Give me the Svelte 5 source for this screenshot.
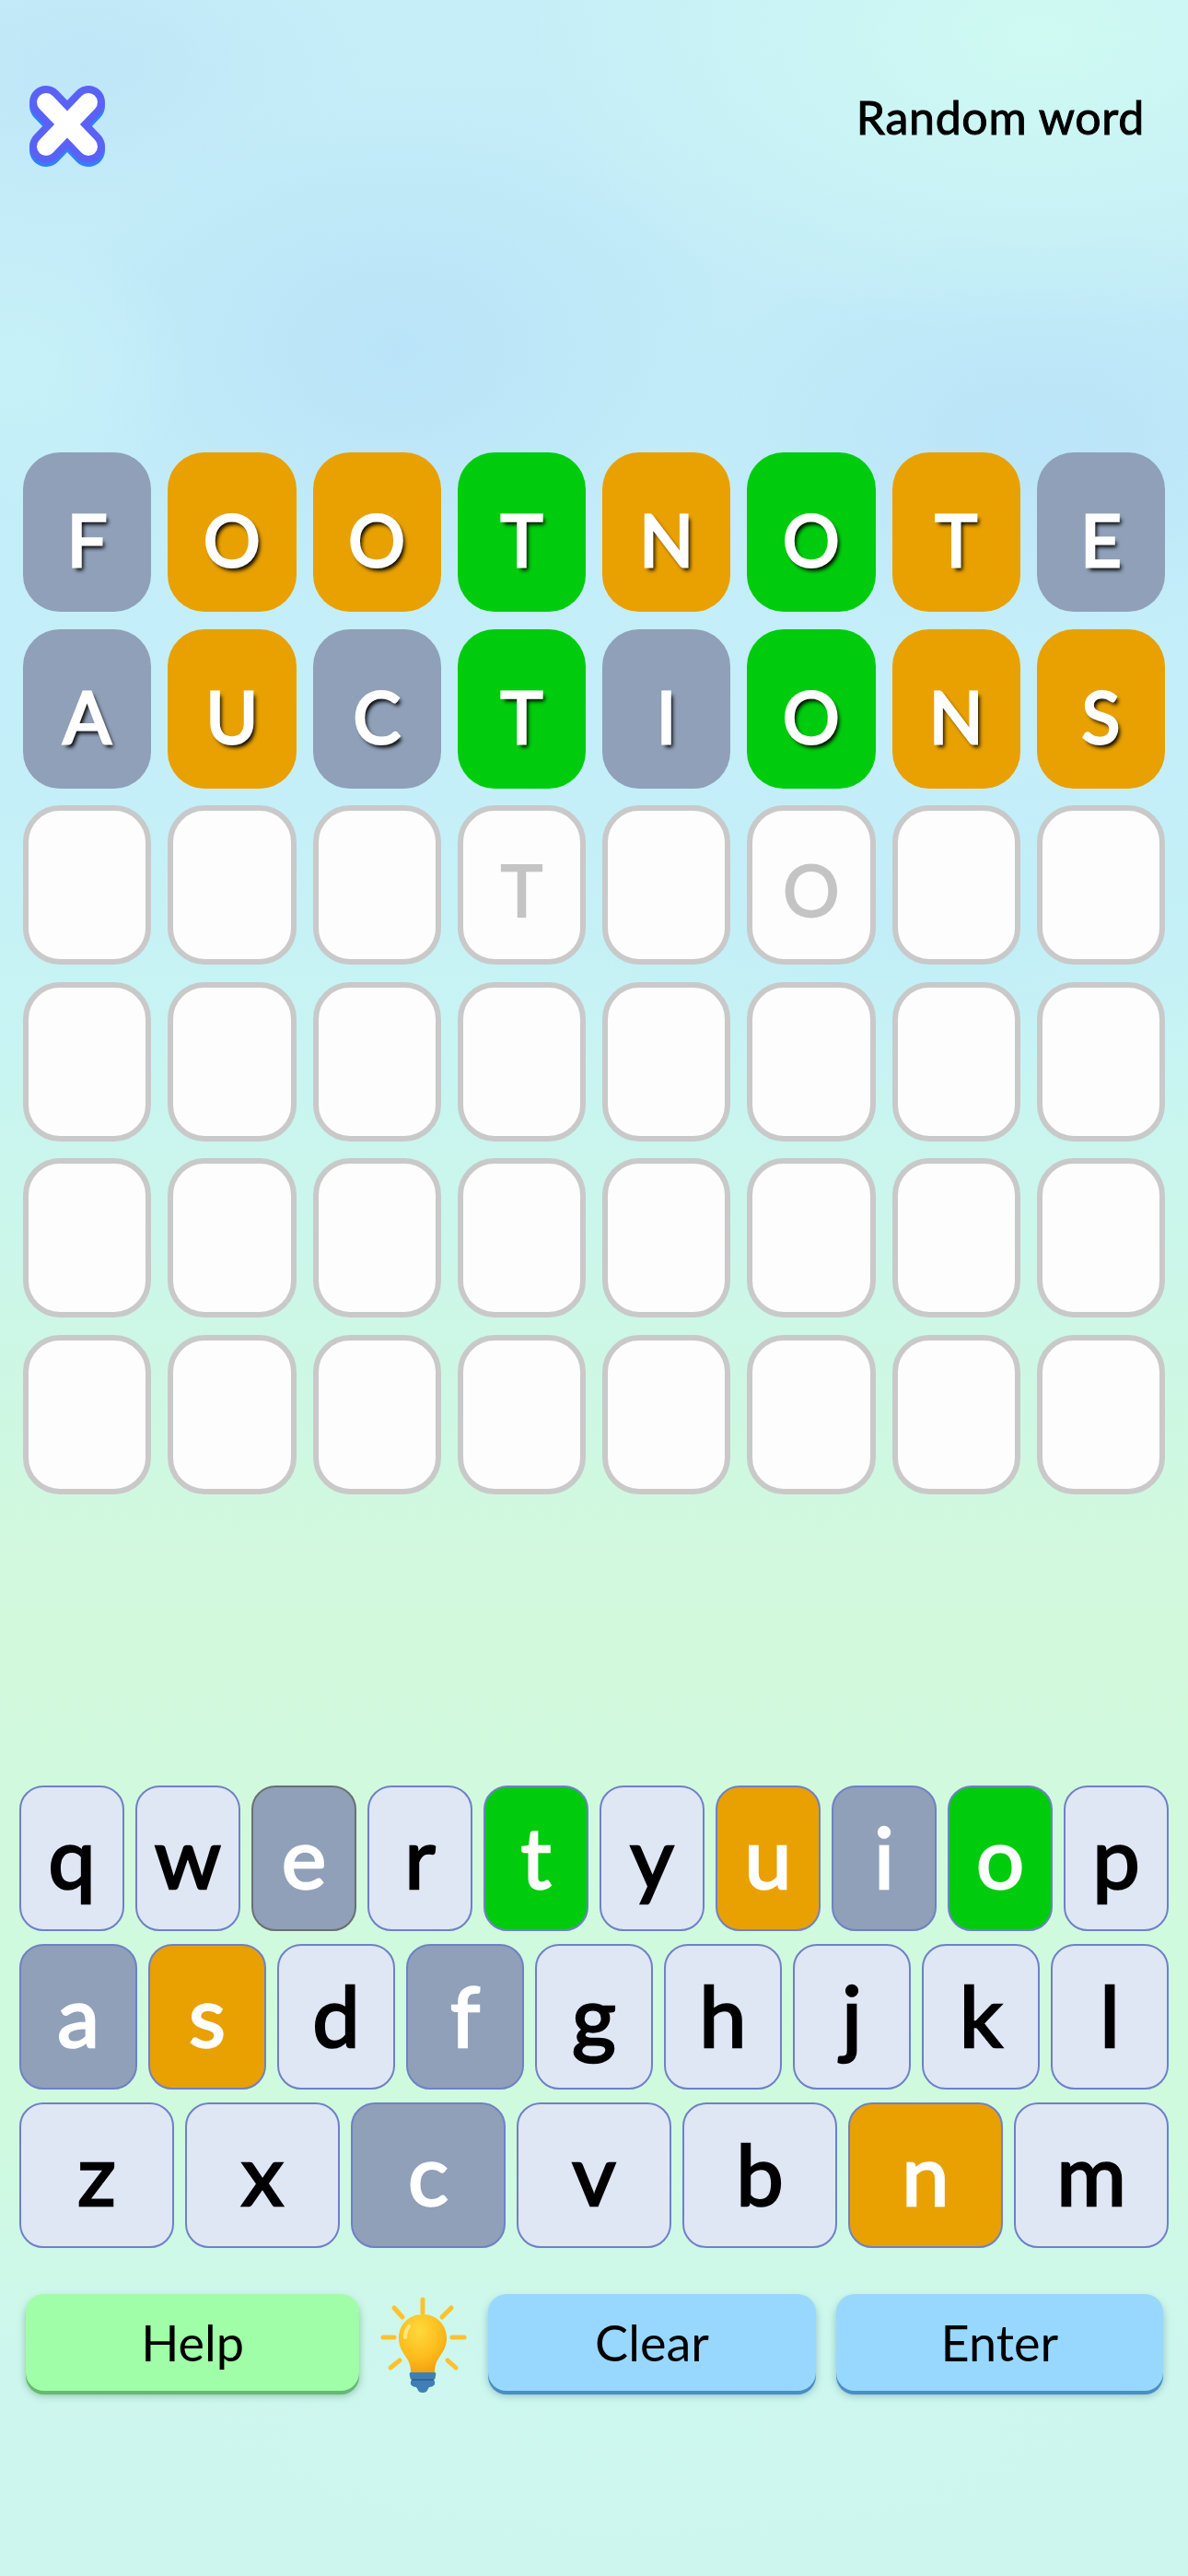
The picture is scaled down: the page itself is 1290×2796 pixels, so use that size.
<script>
  // game state as it stands after two guesses: g = grey, o = orange, t = green
  const guesses = [
    { word: 'FOOTNOTE', marks: 'goototog' },
    { word: 'AUCTIONS', marks: 'gogtgtoo' }
  ];
  const hintRow = ['', '', '', 'T', '', 'O', '', ''];
  const emptyRows = 3;
  const blank = Array(8).fill('');

  const keyRows = [
    [['q'], ['w'], ['e', 'g dark'], ['r'], ['t', 't'], ['y'], ['u', 'o'], ['i', 'g'], ['o', 't'], ['p']],
    [['a', 'g'], ['s', 'o'], ['d'], ['f', 'g'], ['g'], ['h'], ['j'], ['k'], ['l']],
    [['z'], ['x'], ['c', 'g'], ['v'], ['b'], ['n', 'o'], ['m']]
  ];
</script>

<div class="page">
  <header class="top">
    <button class="close" aria-label="Close">
      <svg viewBox="0 0 90 94" width="90" height="94">
        <g fill="none" stroke-linecap="round">
          <path d="M22 24 L68 72 M68 24 L22 72" stroke="#2f80ff" stroke-width="36" />
          <path d="M22 20 L68 68 M68 20 L22 68" stroke="#5a62f6" stroke-width="36" />
          <path d="M22 20 L68 68 M68 20 L22 68" stroke="#fff" stroke-width="20" />
        </g>
      </svg>
    </button>
    <span class="random">Random word</span>
  </header>

  <main class="board">
    {#each guesses as g}
      {#each g.word.split('') as ch, i}
        <div class="tile {g.marks[i]}">{ch}</div>
      {/each}
    {/each}
    {#each hintRow as ch}
      <div class="tile empty">{ch}</div>
    {/each}
    {#each Array(emptyRows) as _}
      {#each blank as ch}
        <div class="tile empty">{ch}</div>
      {/each}
    {/each}
  </main>

  <section class="keyboard">
    {#each keyRows as row}
      <div class="keys">
        {#each row as [k, state]}
          <button class="key {state ?? ''}">{k}</button>
        {/each}
      </div>
    {/each}
  </section>

  <footer class="actions">
    <button class="btn help">Help</button>
    <svg class="bulb" viewBox="0 0 94 106" width="94" height="106" aria-hidden="true">
      <defs>
        <radialGradient id="glass" cx="0.42" cy="0.28" r="0.8">
          <stop offset="0" stop-color="#ffd93b" />
          <stop offset="0.6" stop-color="#fdbb1c" />
          <stop offset="1" stop-color="#f19a0c" />
        </radialGradient>
      </defs>
      <g stroke="#fdc12c" stroke-width="5" stroke-linecap="round">
        <path d="M46 3 V17" />
        <path d="M15 12 L24 22" />
        <path d="M77 12 L67 22" />
        <path d="M3 44 H15" />
        <path d="M78 44 H91" />
        <path d="M11 77 L21 69" />
        <path d="M82 77 L73 69" />
      </g>
      <path d="M46 19 C31 19 20 30 20 45 C20 55 25 61 29 67 C32 72 33 76 33 82 H59 C59 76 60 72 63 67 C67 61 72 55 72 45 C72 30 61 19 46 19 Z" fill="url(#glass)" />
      <path d="M31 32 C28 36 27 40 27 44" stroke="#ffe680" stroke-width="4" stroke-linecap="round" fill="none" />
      <path d="M33 82 H59 Q61 82 60 86 Q60 89 58 90 Q60 92 59 95 Q57 98 53 98 L50 103 Q46 105 42 103 L39 98 Q35 98 33 95 Q32 92 34 90 Q32 89 32 86 Q31 82 33 82 Z" fill="#3f7fb5" />
      <path d="M34 90 H58" stroke="#2f6796" stroke-width="2" />
    </svg>
    <button class="btn blue">Clear</button>
    <button class="btn blue last">Enter</button>
  </footer>
</div>

<style>
  :global(body) {
    margin: 0;
  }
  .page {
    width: 1290px;
    height: 2796px;
    box-sizing: border-box;
    display: flex;
    flex-direction: column;
    font-family: Lato, "Noto Sans", sans-serif;
    background:
      radial-gradient(ellipse 560px 330px at 1130px 40px, rgba(206, 250, 242, 1), rgba(206, 250, 242, 0) 100%),
      radial-gradient(ellipse 200px 150px at 10px 400px, rgba(200, 242, 248, 0.9), rgba(200, 242, 248, 0) 100%),
      radial-gradient(ellipse 380px 280px at 430px 380px, rgba(184, 226, 248, 0.85), rgba(184, 226, 248, 0) 100%),
      radial-gradient(ellipse 420px 220px at 1130px 470px, rgba(184, 226, 248, 0.8), rgba(184, 226, 248, 0) 100%),
      radial-gradient(ellipse 300px 180px at 90px 70px, rgba(188, 228, 247, 0.8), rgba(188, 228, 247, 0) 100%),
      radial-gradient(ellipse 500px 200px at 1000px 1000px, rgba(190, 234, 250, 0.6), rgba(190, 234, 250, 0) 100%),
      radial-gradient(ellipse 600px 160px at 700px 2640px, rgba(205, 248, 240, 0.5), rgba(205, 248, 240, 0) 100%),
      linear-gradient(180deg, #c6eef8 0, #c3ecf8 300px, #c4eff9 850px, #c8f5f2 1150px, #cdf7e6 1450px, #d2f9dc 1750px, #cffade 2300px, #cdf7ee 2560px, #cdf6ee 2796px);
  }
  .top {
    display: flex;
    justify-content: space-between;
    align-items: flex-start;
    height: 491px;
    box-sizing: border-box;
    padding: 91px 47px 0 28px;
  }
  .close {
    border: 0;
    background: none;
    padding: 0;
    display: block;
  }
  .random {
    font-size: 50px;
    line-height: 64px;
    font-weight: 400;
    letter-spacing: 0.7px;
    color: #000;
    margin-top: 4px;
    -webkit-text-stroke: 1px #000;
  }
  .board {
    display: grid;
    grid-template-columns: repeat(8, 1fr);
    grid-auto-rows: 173px;
    gap: 18.6px 18px;
    padding: 0 25px;
  }
  .tile {
    display: flex;
    align-items: center;
    justify-content: center;
    border-radius: 40px;
    box-sizing: border-box;
    padding-top: 16px;
    font-size: 77px;
    line-height: 1;
    font-weight: 400;
    color: #fff;
    -webkit-text-stroke: 3px #fff;
    text-shadow: 3px 4px 4px rgba(0, 0, 0, 1);
  }
  .tile.g {
    background: #8fa0b8;
  }
  .tile.o {
    background: #e8a100;
  }
  .tile.t {
    background: #00cc0e;
  }
  .tile.empty {
    background: #fdfdfd;
    border: 6px solid #c9c9c9;
    color: #c4c4c4;
    -webkit-text-stroke: 2px #c4c4c4;
    text-shadow: none;
    padding-top: 10px;
  }
  .keyboard {
    margin-top: 316.5px;
    display: grid;
    gap: 14px;
    padding: 0 21px;
  }
  .keys {
    display: flex;
    gap: 12px;
    height: 158px;
  }
  .key {
    flex: 1 1 0;
    min-width: 0;
    padding: 0 0 4px;
    box-sizing: border-box;
    border: 2.5px solid #6f80c8;
    border-radius: 26px;
    background: #dfe7f5;
    color: #000;
    font-family: inherit;
    font-size: 92px;
    line-height: 1;
    font-weight: 400;
    -webkit-text-stroke: 2.5px #000;
  }
  .key.g {
    background: #8fa0b8;
    color: #fff;
    -webkit-text-stroke-color: #fff;
  }
  .key.dark {
    border-color: #6b6f74;
  }
  .key.o {
    background: #e8a100;
    color: #fff;
    -webkit-text-stroke-color: #fff;
  }
  .key.t {
    background: #00cc0e;
    color: #fff;
    -webkit-text-stroke-color: #fff;
  }
  .actions {
    margin-top: 50px;
    display: flex;
    align-items: flex-start;
    padding: 0 27px 0 28px;
  }
  .btn {
    height: 105px;
    padding: 0;
    border: 0;
    border-radius: 20px;
    color: #000;
    font-family: inherit;
    font-size: 54px;
    font-weight: 400;
  }
  .help {
    width: 363px;
    background: #a0fea8;
    box-shadow: 0 4px 0 #66b873, 0 5px 8px rgba(60, 120, 70, 0.45);
  }
  .bulb {
    flex: none;
    margin: 3px 23px 0;
  }
  .blue {
    width: 356px;
    background: #98d8ff;
    box-shadow: 0 4px 0 #4a8fc2, 0 5px 8px rgba(50, 100, 140, 0.4);
  }
  .last {
    margin-left: 22px;
  }
</style>
